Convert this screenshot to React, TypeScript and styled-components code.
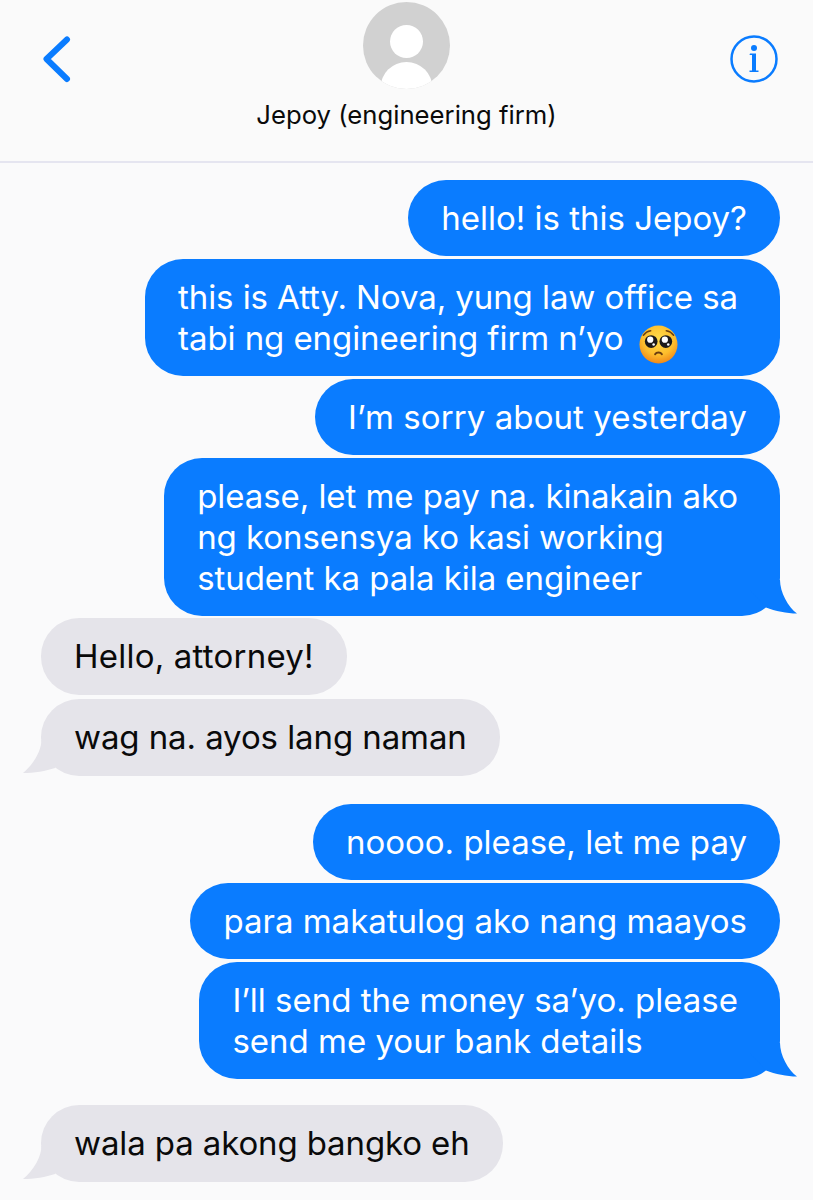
import React, { FC, ReactNode } from "react";
import styled, { createGlobalStyle } from "styled-components";

const GlobalStyle = createGlobalStyle`
  html, body {
    margin: 0;
    padding: 0;
    background: #fafafb;
  }
`;

const Page = styled.main`
  width: 813px;
  height: 1200px;
  overflow: hidden;
  background: #fafafb;
  font-family: Inter, "Liberation Sans", sans-serif;
`;

const Header = styled.header`
  height: 161px;
  display: grid;
  grid-template-columns: 1fr auto 1fr;
  background: #fafafa;
  border-bottom: 2px solid #e5e5f0;
`;

const BackSlot = styled.div`
  padding: 36px 0 0 42px;
`;

const Contact = styled.div`
  display: flex;
  flex-direction: column;
  align-items: center;
  padding-top: 2px;
`;

const Name = styled.div`
  margin-top: 11px;
  font-size: 25.7px;
  line-height: 30px;
  color: #0a0a0a;
`;

const InfoSlot = styled.div`
  display: flex;
  justify-content: flex-end;
  padding: 35px 35px 0 0;
`;

const Thread = styled.section`
  display: flex;
  flex-direction: column;
  padding: 17px 33px 0 41px;
`;

const Row = styled.div<{ $from: "me" | "them"; $top: number }>`
  display: flex;
  justify-content: ${(p) => (p.$from === "me" ? "flex-end" : "flex-start")};
  margin-top: ${(p) => p.$top}px;
`;

const Bubble = styled.div<{ $from: "me" | "them"; $multiline?: boolean; $tracking?: number }>`
  position: relative;
  box-sizing: border-box;
  padding: 18px ${(p) => (p.$multiline ? 42 : 33)}px ${(p) => (p.$from === "me" ? 17 : 18)}px 33px;
  border-radius: 38px;
  font-size: 33px;
  line-height: 41px;
  letter-spacing: ${(p) => p.$tracking ?? 0}px;
  white-space: pre-line;
  background: ${(p) => (p.$from === "me" ? "#0a7cff" : "#e5e4ea")};
  color: ${(p) => (p.$from === "me" ? "#fff" : "#0a0a0a")};
`;

const Tail = styled.svg<{ $from: "me" | "them" }>`
  position: absolute;
  bottom: 0;
  width: 48px;
  height: 36px;
  ${(p) => (p.$from === "me" ? "right: -18px;" : "left: -19px;")}
`;

const EmojiIcon = styled.svg`
  width: 39px;
  height: 39px;
  margin: -10px 0 -10px 6px;
  vertical-align: -4px;
`;

const BackIcon: FC = () => (
  <svg width="30" height="48" viewBox="0 0 30 48" fill="none">
    <path d="M25 3.500 L4.500 23 L25 43" stroke="#0a7cff" strokeWidth="6" strokeLinecap="round" strokeLinejoin="round" />
  </svg>
);

const InfoIcon: FC = () => (
  <svg width="48" height="48" viewBox="0 0 48 48" fill="none">
    <circle cx="24" cy="24" r="22.500" stroke="#0a7cff" strokeWidth="2.500" />
    <circle cx="24" cy="13" r="3" fill="#0a7cff" />
    <path d="M20 18.500h6v17h2.500v1.500h-9v-1.500h2.500v-15.500h-2.500z" fill="#0a7cff" />
  </svg>
);

const AvatarIcon: FC = () => (
  <svg width="87" height="87" viewBox="0 0 87 87">
    <defs>
      <clipPath id="avatar-clip">
        <circle cx="43.500" cy="43.500" r="43.500" />
      </clipPath>
    </defs>
    <circle cx="43.500" cy="43.500" r="43.500" fill="#d1d1d1" />
    <g clipPath="url(#avatar-clip)" fill="#fff">
      <circle cx="43.500" cy="39.500" r="16.500" />
      <ellipse cx="43.500" cy="86" rx="26" ry="26" />
    </g>
  </svg>
);

const PleadingEmoji: FC = () => (
  <EmojiIcon viewBox="0 0 40 40">
    <defs>
      <radialGradient id="emoji-face" cx="50%" cy="35%" r="65%">
        <stop offset="0%" stopColor="#ffdc4a" />
        <stop offset="65%" stopColor="#fdbd2c" />
        <stop offset="100%" stopColor="#f0881a" />
      </radialGradient>
    </defs>
    <circle cx="20" cy="20" r="19.500" fill="url(#emoji-face)" />
    <circle cx="12.500" cy="17" r="6.500" fill="#1d1a1a" />
    <circle cx="27.500" cy="17" r="6.500" fill="#1d1a1a" />
    <circle cx="11.500" cy="15" r="3.200" fill="#fff" />
    <circle cx="26.500" cy="15" r="3.200" fill="#fff" />
    <circle cx="15" cy="20" r="1.300" fill="#fff" />
    <circle cx="30" cy="20" r="1.300" fill="#fff" />
    <path d="M4.500 10.500 C6.500 8 9 6.500 12 6M35.500 10.500 C33.500 8 31 6.500 28 6" stroke="#6e4212" strokeWidth="1.600" fill="none" strokeLinecap="round" />
    <path d="M16.500 30 C18 27.500 22 27.500 23.500 30" stroke="#6b3d10" strokeWidth="2" fill="none" strokeLinecap="round" />
  </EmojiIcon>
);

const BubbleTail: FC<{ from: "me" | "them" }> = ({ from }) => (
  <Tail $from={from} viewBox="0 0 48 36">
    {from === "me" ? (
      <path d="M30 0 C30 12 38 27 47 33.500 C37 33.500 25 31 16 27.500 L0 10 V0 Z" fill="#0a7cff" />
    ) : (
      <path d="M19.500 0 C19.500 10 12 24 1 33 C12 33 24 31 33 28 L48 10 V0 Z" fill="#e5e4ea" />
    )}
  </Tail>
);

interface Message {
  from: "me" | "them";
  top: number;
  text: ReactNode;
  tail?: boolean;
  multiline?: boolean;
  tracking?: number;
}

const messages: Message[] = [
  { from: "me", top: 0, text: "hello! is this Jepoy?" },
  { from: "me", top: 3, multiline: true, tracking: -0.08, text: <>this is Atty. Nova, yung law office sa{"\n"}tabi ng engineering firm n’yo <PleadingEmoji /></> },
  { from: "me", top: 3, tracking: 0.08, text: "I’m sorry about yesterday" },
  { from: "me", top: 3, multiline: true, tracking: -0.06, text: "please, let me pay na. kinakain ako\nng konsensya ko kasi working\nstudent ka pala kila engineer", tail: true },
  { from: "them", top: 2, tracking: 0.22, text: "Hello, attorney!" },
  { from: "them", top: 4, tracking: -0.09, text: "wag na. ayos lang naman", tail: true },
  { from: "me", top: 28, text: "noooo. please, let me pay" },
  { from: "me", top: 3, text: "para makatulog ako nang maayos" },
  { from: "me", top: 3, multiline: true, text: "I’ll send the money sa’yo. please\nsend me your bank details", tail: true },
  { from: "them", top: 26, tracking: -0.12, text: "wala pa akong bangko eh", tail: true },
];

const App: FC = () => (
  <Page>
    <GlobalStyle />
    <Header>
      <BackSlot>
        <BackIcon />
      </BackSlot>
      <Contact>
        <AvatarIcon />
        <Name>Jepoy (engineering firm)</Name>
      </Contact>
      <InfoSlot>
        <InfoIcon />
      </InfoSlot>
    </Header>
    <Thread>
      {messages.map((m, i) => (
        <Row key={i} $from={m.from} $top={m.top}>
          <Bubble $from={m.from} $multiline={m.multiline} $tracking={m.tracking}>
            {m.tail && <BubbleTail from={m.from} />}
            {m.text}
          </Bubble>
        </Row>
      ))}
    </Thread>
  </Page>
);

export default App;
